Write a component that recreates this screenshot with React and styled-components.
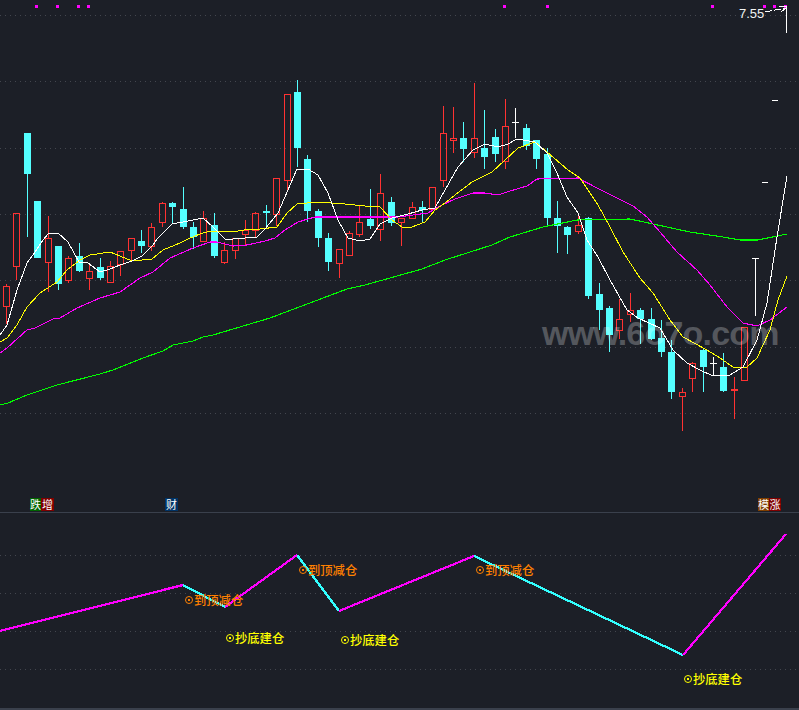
import React from "react";
import styled, { createGlobalStyle } from "styled-components";

const GlobalStyle = createGlobalStyle`
  html, body { margin: 0; padding: 0; background: #1c1f27; }
  body { width: 799px; height: 710px; overflow: hidden; font-family: "Liberation Sans", "Noto Sans CJK SC", sans-serif; }
`;

const Page = styled.div`
  position: relative;
  width: 799px;
  height: 710px;
  display: flex;
  flex-direction: column;
  background: #1c1f27;
  overflow: hidden;
`;
const MainPane = styled.section`
  position: relative;
  height: 512px;
  flex: none;
`;
const SubPane = styled.section`
  position: relative;
  flex: 1;
  border-top: 1px solid #3a404c;
  border-bottom: 2px solid #3a404c;
`;
const Chart = styled.svg`
  position: absolute;
  left: 0;
  top: 0;
  display: block;
`;
const Watermark = styled.div`
  position: absolute;
  left: 542px;
  top: 311px;
  font: bold 34px/44px "Liberation Sans", sans-serif;
  letter-spacing: -0.8px;
  color: rgba(255, 255, 255, 0.26);
  white-space: nowrap;
`;
const PriceLabel = styled.div`
  position: absolute;
  left: 739px;
  top: 6px;
  font: 13px/16px "Liberation Sans", sans-serif;
  color: #f2f4f4;
`;
const TagRow = styled.div`
  position: absolute;
  left: ${(p) => p.$x}px;
  top: 498px;
  display: flex;
`;
const Tag = styled.span`
  display: block;
  width: ${(p) => p.$w || 11}px;
  height: 13px;
  background: ${(p) => p.$bg};
  color: #fff;
  font: 11px/13px "Noto Sans CJK SC", sans-serif;
  text-align: center;
  white-space: nowrap;
`;
const Signal = styled.div`
  position: absolute;
  left: ${(p) => p.$x}px;
  top: ${(p) => p.$y}px;
  display: flex;
  align-items: center;
  gap: 1px;
  color: ${(p) => p.$color};
  font: 500 12.3px/16px "Noto Sans CJK SC", sans-serif;
  white-space: nowrap;
`;
const Ring = styled.span`
  position: relative;
  width: 8px;
  height: 8px;
  box-sizing: border-box;
  border: 1px solid currentColor;
  border-radius: 50%;
  &::after {
    content: "";
    position: absolute;
    left: 2px;
    top: 2px;
    width: 2px;
    height: 2px;
    background: currentColor;
  }
`;

const CY = "#54ffff";
const RD = "#ff3232";
const WH = "#ffffff";
// [center x, body top, body bottom, wick top, wick bottom, kind]
const candles = [
  [6, 286, 307, 284, 324, "r"], [16, 213, 267, 213, 280, "r"], [27, 133, 174, 133, 237, "c"], [37, 201, 258, 201, 258, "c"],
  [48, 238, 263, 216, 292, "r"], [58, 246, 284, 246, 290, "c"], [68, 258, 281, 256, 283, "r"], [79, 256, 271, 243, 272, "c"],
  [89, 271, 279, 265, 290, "r"], [100, 267, 278, 258, 280, "c"], [110, 266, 283, 261, 283, "r"], [120, 251, 265, 251, 276, "r"],
  [131, 238, 251, 238, 261, "r"], [141, 241, 246, 230, 253, "c"], [151, 227, 247, 223, 251, "r"], [162, 203, 223, 202, 227, "r"],
  [172, 203, 207, 202, 223, "c"], [183, 209, 227, 187, 229, "c"], [193, 227, 237, 222, 249, "c"], [203, 218, 242, 211, 242, "r"],
  [214, 225, 256, 213, 258, "c"], [224, 250, 263, 242, 264, "r"], [235, 238, 251, 238, 259, "r"], [245, 230, 235, 220, 245, "r"],
  [255, 213, 231, 212, 237, "r"], [266, 211, 213, 205, 227, "c"], [276, 178, 215, 178, 226, "r"], [287, 94, 181, 94, 191, "r"],
  [297, 92, 148, 80, 167, "c"], [307, 159, 211, 155, 222, "c"], [318, 211, 238, 209, 247, "c"], [328, 238, 262, 233, 271, "c"],
  [339, 249, 264, 249, 278, "r"], [349, 233, 256, 231, 256, "r"], [359, 222, 235, 206, 237, "r"], [370, 219, 226, 189, 229, "c"],
  [380, 193, 230, 174, 241, "r"], [391, 202, 223, 197, 226, "c"], [401, 218, 223, 218, 246, "r"], [412, 207, 219, 202, 219, "r"],
  [422, 207, 210, 201, 222, "c"], [432, 187, 210, 187, 210, "r"], [443, 133, 181, 106, 187, "r"], [453, 138, 141, 107, 153, "r"],
  [463, 138, 149, 122, 162, "c"], [474, 138, 153, 83, 158, "r"], [484, 148, 157, 110, 169, "c"], [495, 137, 154, 129, 162, "c"],
  [505, 126, 162, 99, 169, "r"], [526, 128, 146, 124, 150, "c"], [536, 140, 159, 140, 169, "c"], [547, 154, 218, 148, 226, "c"],
  [557, 218, 226, 201, 253, "c"], [567, 227, 235, 226, 254, "c"], [578, 225, 232, 215, 234, "r"], [588, 218, 296, 217, 299, "c"],
  [599, 294, 310, 283, 330, "c"], [609, 308, 335, 306, 352, "c"], [619, 319, 331, 299, 339, "r"], [630, 310, 315, 293, 322, "r"],
  [640, 310, 319, 308, 344, "c"], [651, 319, 339, 308, 340, "c"], [661, 338, 352, 320, 357, "c"], [671, 352, 392, 340, 399, "c"],
  [682, 392, 397, 388, 431, "r"], [692, 363, 379, 362, 392, "r"], [703, 350, 367, 349, 392, "c"], [723, 367, 391, 353, 392, "c"],
  [734, 389, 391, 377, 419, "r"], [744, 327, 381, 327, 381, "r"],
];
const doji = [[515, 122, 108, 138], [713, 363, 357, 376]];

const white = [[0,335],[7,325],[17,290],[27,263],[33,255],[43,240],[48,234],[58,233],[68,242],[79,262],[88,263],[100,272],[110,269],[120,265],[132,261],[142,256],[153,245],[157,239],[172,224],[183,222],[193,220],[203,218],[213,227],[225,239],[233,239],[245,238],[257,237],[265,229],[278,213],[297,169],[308,169],[318,175],[328,193],[338,220],[348,238],[360,241],[370,239],[380,224],[392,218],[408,214],[422,210],[435,208],[445,190],[458,167],[473,150],[485,144],[498,147],[508,144],[517,139],[535,142],[547,153],[557,173],[567,197],[578,213],[587,240],[598,257],[610,280],[627,310],[638,318],[660,328],[673,350],[687,363],[700,370],[713,376],[730,375],[743,367],[757,340],[767,303],[777,237],[787,176]];
const yellow = [[0,342],[7,338],[17,325],[27,307],[40,293],[57,282],[67,270],[80,260],[90,255],[110,252],[120,256],[132,261],[152,259],[163,250],[180,243],[188,239],[200,234],[210,231],[238,231],[250,229],[260,229],[277,227],[287,213],[297,204],[318,202],[345,204],[365,206],[380,207],[392,220],[402,227],[412,227],[425,222],[435,210],[445,203],[455,195],[472,182],[492,172],[505,160],[518,148],[535,142],[547,152],[568,170],[580,178],[598,205],[610,227],[623,252],[640,278],[653,293],[670,320],[683,337],[707,350],[720,358],[733,367],[747,367],[757,358],[770,330],[778,300],[787,276]];
const magenta = [[0,353],[7,348],[27,330],[35,328],[53,319],[60,318],[77,308],[100,298],[120,292],[140,278],[153,272],[170,258],[193,248],[210,242],[217,242],[233,246],[247,245],[265,241],[275,238],[285,230],[298,222],[315,217],[398,217],[428,213],[442,205],[455,199],[473,193],[485,193],[498,195],[510,191],[527,186],[537,179],[578,178],[597,188],[633,206],[647,217],[660,232],[677,252],[697,270],[710,285],[727,307],[743,323],[757,326],[770,320],[787,307]];
const green = [[0,405],[8,403],[27,395],[33,393],[57,385],[100,374],[113,370],[143,358],[163,351],[173,345],[193,341],[203,337],[213,335],[270,318],[347,289],[365,285],[422,269],[445,260],[492,245],[510,237],[543,227],[577,220],[630,219],[653,224],[690,232],[723,237],[740,240],[758,240],[787,234]];

const pts = (a) => a.map((p) => p.join(",")).join(" ");
const topMarks = [35, 56, 77, 87, 503, 546, 711, 763, 773, 784];
const mainGrid = [15, 81, 148, 214, 280, 347, 413];
const subGrid = [42, 80, 118, 156];

const subPink = [[[0, 118], [183, 72]], [[225, 94], [297, 42]], [[339, 98], [474, 43]], [[683, 142], [786, 21]]];
const subCyan = [[[183, 72], [225, 94]], [[297, 42], [339, 98]], [[474, 43], [683, 142]]];

const signals = [
  [185, 79, "#ff8000", "到顶减仓"],
  [299, 49, "#ff8000", "到顶减仓"],
  [476, 49, "#ff8000", "到顶减仓"],
  [226, 117, "#ffff00", "抄底建仓"],
  [341, 119, "#ffff00", "抄底建仓"],
  [684, 158, "#ffff00", "抄底建仓"],
];

export default function App() {
  return (
    <Page>
      <GlobalStyle />
      <MainPane>
        <Chart width="799" height="512" viewBox="0 0 799 512" shapeRendering="crispEdges">
          {mainGrid.map((y) => (
            <line key={y} x1="0" x2="799" y1={y + 0.5} y2={y + 0.5} stroke="#43464e" strokeDasharray="1 4" />
          ))}
          {topMarks.map((x) => (
            <rect key={x} x={x} y="5" width="3" height="3" fill="#ff00ff" />
          ))}
          {candles.map(([x, t, b, wt, wb, k]) => {
            const color = k === "r" ? RD : CY;
            return (
              <g key={x}>
                {wt < t && <rect x={x} y={wt} width="1" height={t - wt} fill={color} />}
                {wb > b && <rect x={x} y={b} width="1" height={wb - b} fill={color} />}
                {k === "r" ? (
                  <rect x={x - 3 + 0.5} y={t + 0.5} width="6" height={b - t - 1} fill="none" stroke={color} />
                ) : (
                  <rect x={x - 3} y={t} width="7" height={b - t} fill={color} />
                )}
              </g>
            );
          })}
          {doji.map(([x, y, t, b]) => (
            <g key={x}>
              <rect x={x} y={t} width="1" height={b - t} fill={WH} />
              <rect x={x - 3} y={y} width="7" height="1" fill={WH} />
            </g>
          ))}
          <rect x="755" y="258" width="1" height="58" fill={WH} />
          <rect x="752" y="258" width="7" height="1" fill={WH} />
          <rect x="762" y="182" width="6" height="1" fill={WH} />
          <rect x="772" y="100" width="6" height="1" fill={WH} />
          <rect x="786" y="8" width="1" height="25" fill={WH} />
          <polyline points="765,12 786,8" fill="none" stroke={WH} strokeDasharray="7 2" />
          <polyline points="779,6 787,7 781,12" fill="none" stroke={WH} />
          <polyline points={pts(green)} fill="none" stroke="#00ff00" strokeWidth="1.1" />
          <polyline points={pts(magenta)} fill="none" stroke="#ff00ff" strokeWidth="1.1" />
          <polyline points={pts(yellow)} fill="none" stroke="#ffff00" />
          <polyline points={pts(white)} fill="none" stroke="#ffffff" />
        </Chart>
        <Watermark>www.6o7o.com</Watermark>
        <PriceLabel>7.55</PriceLabel>
        <TagRow $x={30}>
          <Tag $bg="#006400">跌</Tag>
          <Tag $bg="#800000" $w={13}>增</Tag>
        </TagRow>
        <TagRow $x={165}>
          <Tag $bg="#003366" $w={13}>财</Tag>
        </TagRow>
        <TagRow $x={758}>
          <Tag $bg="#804000">模</Tag>
          <Tag $bg="#800000" $w={12}>涨</Tag>
        </TagRow>
      </MainPane>
      <SubPane>
        <Chart width="799" height="195" viewBox="0 0 799 195" shapeRendering="crispEdges">
          {subGrid.map((y) => (
            <line key={y} x1="0" x2="799" y1={y + 0.5} y2={y + 0.5} stroke="#43464e" strokeDasharray="1 4" />
          ))}
          {subCyan.map((s, i) => (
            <polyline key={i} points={pts(s)} fill="none" stroke="#33ffff" strokeWidth="2.2" />
          ))}
          {subPink.map((s, i) => (
            <polyline key={i} points={pts(s)} fill="none" stroke="#ff00ff" strokeWidth="2.2" />
          ))}
        </Chart>
        {signals.map(([x, y, c, t]) => (
          <Signal key={x} $x={x} $y={y} $color={c}>
            <Ring />
            {t}
          </Signal>
        ))}
      </SubPane>
    </Page>
  );
}
